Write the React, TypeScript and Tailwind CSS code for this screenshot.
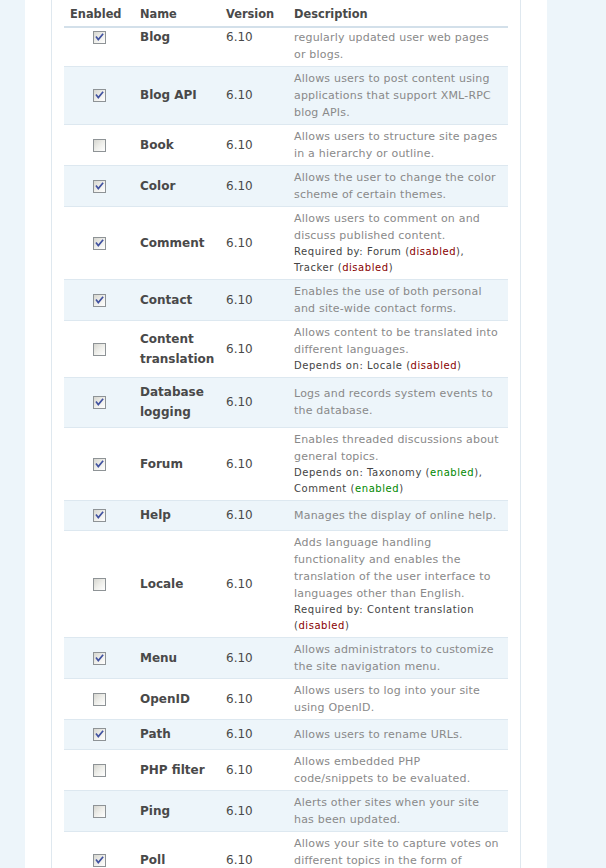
import { Fragment } from 'react';

type Req = { label: string; items: { name: string; enabled: boolean }[] };

type Module = {
  name: string;
  enabled: boolean;
  description: string;
  req?: Req;
};

const modules: Module[] = [
  { name: 'Blog', enabled: true, description: 'Enables keeping easily and regularly updated user web pages or blogs.' },
  { name: 'Blog API', enabled: true, description: 'Allows users to post content using applications that support XML-RPC blog APIs.' },
  { name: 'Book', enabled: false, description: 'Allows users to structure site pages in a hierarchy or outline.' },
  { name: 'Color', enabled: true, description: 'Allows the user to change the color scheme of certain themes.' },
  {
    name: 'Comment',
    enabled: true,
    description: 'Allows users to comment on and discuss published content.',
    req: { label: 'Required by', items: [{ name: 'Forum', enabled: false }, { name: 'Tracker', enabled: false }] },
  },
  { name: 'Contact', enabled: true, description: 'Enables the use of both personal and site-wide contact forms.' },
  {
    name: 'Content translation',
    enabled: false,
    description: 'Allows content to be translated into different languages.',
    req: { label: 'Depends on', items: [{ name: 'Locale', enabled: false }] },
  },
  { name: 'Database logging', enabled: true, description: 'Logs and records system events to the database.' },
  {
    name: 'Forum',
    enabled: true,
    description: 'Enables threaded discussions about general topics.',
    req: { label: 'Depends on', items: [{ name: 'Taxonomy', enabled: true }, { name: 'Comment', enabled: true }] },
  },
  { name: 'Help', enabled: true, description: 'Manages the display of online help.' },
  {
    name: 'Locale',
    enabled: false,
    description: 'Adds language handling functionality and enables the translation of the user interface to languages other than English.',
    req: { label: 'Required by', items: [{ name: 'Content translation', enabled: false }] },
  },
  { name: 'Menu', enabled: true, description: 'Allows administrators to customize the site navigation menu.' },
  { name: 'OpenID', enabled: false, description: 'Allows users to log into your site using OpenID.' },
  { name: 'Path', enabled: true, description: 'Allows users to rename URLs.' },
  { name: 'PHP filter', enabled: false, description: 'Allows embedded PHP code/snippets to be evaluated.' },
  { name: 'Ping', enabled: false, description: 'Alerts other sites when your site has been updated.' },
  { name: 'Poll', enabled: true, description: 'Allows your site to capture votes on different topics in the form of multiple choice questions.' },
];

function Checkbox({ checked }: { checked: boolean }) {
  return (
    <span className="inline-flex w-[13px] h-[13px] border border-[#8e9396] bg-gradient-to-br from-[#d6d6d0] via-[#eeeeea] to-white align-middle">
      {checked && (
        <svg viewBox="0 0 11 11" className="w-[11px] h-[11px]">
          <path d="M2.5 5.2 L4.3 7.6 L8.6 2.4" fill="none" stroke="#4152a0" strokeWidth="1.7" strokeLinecap="square" />
        </svg>
      )}
    </span>
  );
}

const colgroup = (
  <colgroup>
    <col className="w-[70px]" />
    <col className="w-[86px]" />
    <col className="w-[68px]" />
    <col className="w-[220px]" />
  </colgroup>
);

export default function App() {
  return (
    <div className="h-[868px] overflow-hidden bg-[#edf5fa] font-['DejaVu_Sans',Verdana,sans-serif] text-[#494949]">
      <div className="ml-[25px] w-[522px] bg-white min-h-full">
        <div className="relative ml-[26px] w-[470px] min-h-[868px] border-x border-[#dfe8ef] px-[12px] pt-[8.5px]">
          {/* sticky table header, as drawn when the page is scrolled */}
          <table className="absolute left-[12px] top-0 w-[444px] table-fixed border-collapse bg-white z-10">
            {colgroup}
            <thead>
              <tr className="border-b-2 border-[#d3e0ea] text-left text-[11.4px] font-bold">
                <th className="px-[6px] pt-[3px] h-[27px] align-middle">Enabled</th>
                <th className="px-[6px] pt-[3px] align-middle">Name</th>
                <th className="px-[6px] pt-[3px] align-middle">Version</th>
                <th className="px-[6px] pt-[3px] align-middle">Description</th>
              </tr>
            </thead>
          </table>

          <table className="w-[444px] table-fixed border-collapse">
            {colgroup}
            <tbody>
              {modules.map((m, i) => (
                <tr key={m.name} className={`border-b border-[#dde8f0] ${i % 2 === 1 ? 'bg-[#edf5fa]' : 'bg-white'}`}>
                  <td className="px-[6px] py-[4px] text-center align-middle leading-[13px]">
                    <Checkbox checked={m.enabled} />
                  </td>
                  <td className="px-[6px] py-[4.5px] align-middle text-[12px] font-bold leading-[20px]">{m.name}</td>
                  <td className="px-[6px] py-[4px] align-middle text-[12px] leading-[20px]">6.10</td>
                  <td className="px-[6px] py-[3px] align-middle">
                    <div className="text-[11px] leading-[17px] tracking-[0.2px] text-[#898989]">{m.description}</div>
                    {m.req && (
                      <div className="text-[10px] leading-[16px] tracking-[0.55px] text-[#444]">
                        {m.req.label}:{' '}
                        {m.req.items.map((it, j) => (
                          <Fragment key={it.name}>
                            {it.name} (
                            <span className={it.enabled ? 'text-[#080]' : 'text-[#800]'}>
                              {it.enabled ? 'enabled' : 'disabled'}
                            </span>
                            ){j < m.req!.items.length - 1 ? ', ' : ''}
                          </Fragment>
                        ))}
                      </div>
                    )}
                  </td>
                </tr>
              ))}
            </tbody>
          </table>
        </div>
      </div>
    </div>
  );
}
